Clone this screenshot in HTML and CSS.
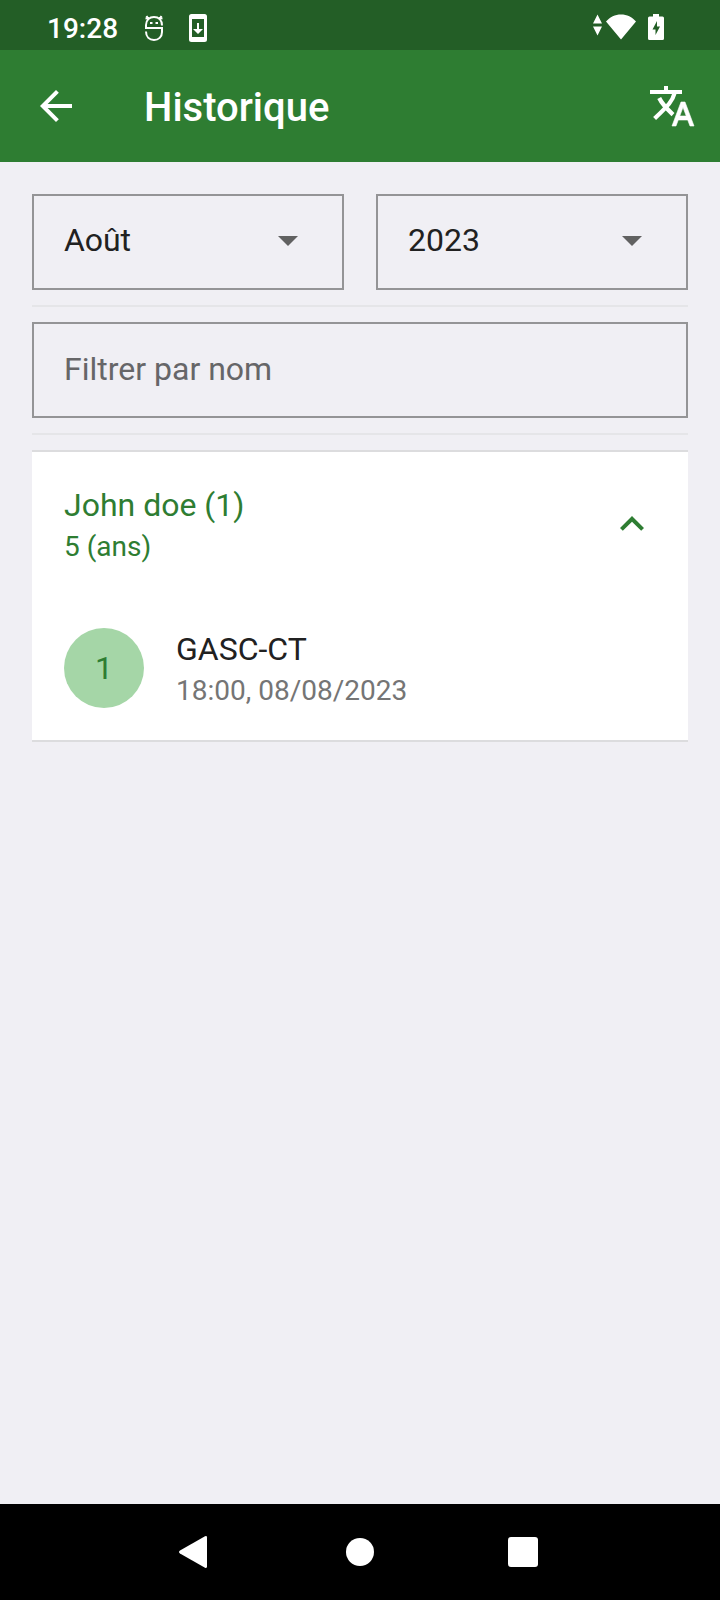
FILE: index.html
```html
<!DOCTYPE html>
<html lang="fr">
<head>
<meta charset="utf-8">
<meta name="viewport" content="width=device-width, initial-scale=1">
<title>Historique</title>
<link rel="stylesheet" href="styles.css">
</head>
<body>
<div class="status">
  <time class="clock">19:28</time>
  <svg class="status-face" width="20" height="28" viewBox="0 0 20 28" fill="none" stroke="#fff" stroke-width="2" aria-hidden="true">
    <path d="M18 11.500C18 6 14.500 3 10 3S2 6 2 11v3h16v4c0 5-3.500 8-8 8s-8-3-8-8.500"/>
    <path d="M2.500 2l2 3M17.500 2l-2 3M1.500 4.500l3.500-.500M18.500 4.500L15 4"/>
    <path d="M6 9h2.500M11.500 9H14" stroke-width="2.200"/>
  </svg>
  <svg class="status-phone" width="18" height="28" viewBox="0 0 18 28" fill="#fff" aria-hidden="true">
    <path fill-rule="evenodd" d="M2.500 0h13A2.500 2.500 0 0 1 18 2.500v23a2.500 2.500 0 0 1-2.500 2.500h-13A2.500 2.500 0 0 1 0 25.500v-23A2.500 2.500 0 0 1 2.500 0zM3 5v18h12V5z"/>
    <path d="M8 9h2v6h4l-5 5-5-5h4z"/>
  </svg>
  <span class="spacer"></span>
  <svg width="43" height="28" viewBox="0 0 43 28" fill="#fff" aria-hidden="true">
    <path d="M4.500.500L9 9.500H0zM0 12.500h9l-4.500 9zM28 25.500L13 7.500C17 3 22 .500 28 .500S39 3 43 7.500z"/>
  </svg>
  <svg class="status-battery" width="16" height="28" viewBox="0 0 16 28" fill="#fff" aria-hidden="true">
    <path fill-rule="evenodd" d="M5 0h6v2.500h3.500Q16 2.500 16 4v20.500q0 1.500-1.500 1.500h-13Q0 26 0 24.500V4q0-1.500 1.500-1.500H5zM9 7l-4.500 8.500H7.500V21L12 12.500H9z"/>
  </svg>
</div>

<header class="appbar">
  <button class="icon-button" type="button" aria-label="Retour">
    <svg class="icon" viewBox="0 0 24 24"><path d="M20 11H7.830l5.590-5.590L12 4l-8 8 8 8 1.410-1.410L7.830 13H20v-2z"/></svg>
  </button>
  <h1 class="title">Historique</h1>
  <button class="icon-button" type="button" aria-label="Langue">
    <svg class="icon" viewBox="0 0 24 24">
      <path d="M1 4h7V2h2v2h7v2H1z"/>
      <path d="M13.300 5.500C12.300 9.500 10.300 11.600 3.300 18.300M5.600 8C7 11 9 13 12.500 16.300" fill="none" stroke="currentColor" stroke-width="2.100"/>
      <path d="M18.500 10h-2L12 22h2l1.120-3h4.750L21 22h2l-4.500-12zm-2.620 7l1.620-4.330L19.120 17h-3.240z" stroke="currentColor" stroke-width=".3"/>
    </svg>
  </button>
</header>

<main class="content">
  <div class="filters">
    <div class="select-box">
      <select class="field select" aria-label="Mois"><option>Août</option></select>
      <svg class="icon caret" viewBox="0 0 24 24" aria-hidden="true"><path d="M7 10l5 5 5-5z"/></svg>
    </div>
    <div class="select-box">
      <select class="field select" aria-label="Année"><option>2023</option></select>
      <svg class="icon caret" viewBox="0 0 24 24" aria-hidden="true"><path d="M7 10l5 5 5-5z"/></svg>
    </div>
  </div>
  <hr class="divider">
  <input class="field" type="text" placeholder="Filtrer par nom" aria-label="Filtrer par nom">
  <hr class="divider">
  <section class="card">
    <button class="row person" type="button" aria-expanded="true">
      <span class="labels">
        <span class="primary">John doe (1)</span>
        <span class="secondary">5 (ans)</span>
      </span>
      <svg class="icon" viewBox="0 0 24 24" aria-hidden="true"><path d="M12 8l-6 6 1.410 1.410L12 10.830l4.590 4.580L18 14z"/></svg>
    </button>
    <div class="row visit">
      <span class="avatar">1</span>
      <span class="labels">
        <span class="primary">GASC-CT</span>
        <span class="secondary">18:00, 08/08/2023</span>
      </span>
    </div>
  </section>
</main>

<nav class="navbar" aria-label="Système">
  <button class="nav-button" type="button" aria-label="Précédent">
    <svg class="icon" viewBox="0 0 48 48"><path d="M34 8.300L9 22.500q-2 1.500 0 3L34 39.700q2 .800 2-1.200v-29q0-2-2-1.200z"/></svg>
  </button>
  <button class="nav-button" type="button" aria-label="Accueil">
    <svg class="icon" viewBox="0 0 48 48"><circle cx="24" cy="24" r="14"/></svg>
  </button>
  <button class="nav-button" type="button" aria-label="Applications récentes">
    <svg class="icon" viewBox="0 0 48 48"><rect x="7" y="9" width="30" height="30" rx="3"/></svg>
  </button>
</nav>
</body>
</html>
```
FILE: styles.css
```css
* {
  box-sizing: border-box;
}

body {
  margin: 0;
  min-height: 100vh;
  display: flex;
  flex-direction: column;
  background: #f0eff4;
  color: #212121;
  font-family: Roboto, "Liberation Sans", sans-serif;
  font-size: 32px;
}

button {
  margin: 0;
  padding: 0;
  border: 0;
  background: none;
  color: inherit;
  font: inherit;
  text-align: left;
}

.icon {
  display: block;
  flex: none;
  width: 48px;
  height: 48px;
  fill: currentColor;
}

.status {
  display: flex;
  align-items: center;
  height: 50px;
  padding: 6px 56px 0 47px;
  background: #235e26;
  color: #fff;
}

.clock {
  font-size: 28px;
  font-weight: 500;
}

.status-face {
  margin-left: 26px;
}

.status-phone {
  margin-left: 25px;
}

.status-battery {
  margin-left: 12px;
}

.spacer {
  flex: 1;
}

.appbar {
  display: flex;
  align-items: center;
  height: 112px;
  padding: 0 24px 0 32px;
  background: #2e7d32;
  color: #fff;
}

.title {
  flex: 1;
  margin: 0 0 0 64px;
  padding-top: 2px;
  font-size: 40px;
  font-weight: 500;
}

.content {
  flex: 1;
  padding: 32px;
}

.filters {
  display: grid;
  grid-template-columns: 1fr 1fr;
  gap: 32px;
}

.select-box {
  position: relative;
}

.field {
  display: block;
  width: 100%;
  height: 96px;
  margin: 0;
  padding: 0 30px 2px;
  border: 2px solid #949496;
  border-radius: 0;
  background: transparent;
  color: #212121;
  font: inherit;
}

.field::placeholder {
  color: #666668;
  opacity: 1;
}

.select {
  appearance: none;
  padding-bottom: 4px;
}

.caret {
  position: absolute;
  top: 22px;
  right: 32px;
  color: #616161;
  pointer-events: none;
}

.divider {
  height: 2px;
  margin: 15px 0;
  border: 0;
  background: #e5e5e8;
}

.card {
  border: solid #dcdcde;
  border-width: 2px 0;
  background: #fff;
}

.row {
  display: flex;
  align-items: center;
  width: 100%;
  height: 144px;
  padding: 0 32px;
}

.person {
  color: #2e7d32;
}

.labels {
  flex: 1;
  display: flex;
  flex-direction: column;
  padding-top: 4px;
  line-height: 42px;
}

.secondary {
  font-size: 28px;
}

.visit {
  gap: 32px;
}

.visit .secondary {
  color: #757575;
}

.avatar {
  display: grid;
  place-items: center;
  width: 80px;
  height: 80px;
  border-radius: 50%;
  background: #a5d6a7;
  color: #2e7d32;
}

.navbar {
  display: grid;
  grid-template-columns: repeat(3, 1fr);
  height: 96px;
  padding: 0 112px;
  background: #000;
  color: #fff;
}

.nav-button {
  display: grid;
  place-items: center;
}
```
